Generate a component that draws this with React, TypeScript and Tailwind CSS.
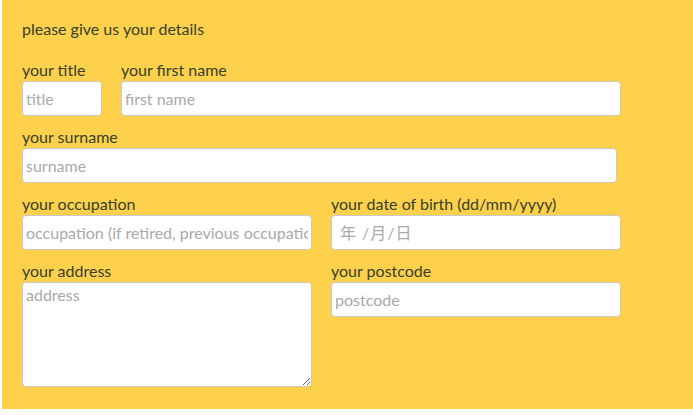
import React from 'react';

const font = { fontFamily: 'Lato, "Noto Sans CJK SC", sans-serif' };

const inputClass =
  'h-[35px] rounded-[4px] border border-[#c9c9c9] bg-white px-[3px] text-[16px] text-[#333] placeholder:text-[#a9a9a9] outline-none';

const Field: React.FC<{ label: string; width: string; children: React.ReactNode }> = ({ label, width, children }) => (
  <div className={`flex flex-col ${width}`}>
    <label className="mb-[2px] h-[18px] text-[16px] leading-[18px] text-[#38402f] whitespace-nowrap">{label}</label>
    {children}
  </div>
);

export default function App() {
  return (
    <div className="h-[415px] w-[693px] bg-white" style={font}>
      <div className="ml-[2px] h-[409px] bg-[#fdd14b] pl-[20px] pt-[19px]">
        <p className="h-[20px] text-[16px] leading-[20px] text-[#38402f]">please give us your details</p>

        <div className="mt-[22px] flex gap-[19px]">
          <Field label="your title" width="w-[80px]">
            <input className={`${inputClass} w-[80px]`} placeholder="title" />
          </Field>
          <Field label="your first name" width="w-[500px]">
            <input className={`${inputClass} w-[500px]`} placeholder="first name" />
          </Field>
        </div>

        <div className="mt-[12px] flex">
          <Field label="your surname" width="w-[595px]">
            <input className={`${inputClass} w-[595px]`} placeholder="surname" />
          </Field>
        </div>

        <div className="mt-[12px] flex gap-[19px]">
          <Field label="your occupation" width="w-[290px]">
            <input className={`${inputClass} w-[290px]`} placeholder="occupation (if retired, previous occupation)" />
          </Field>
          <Field label="your date of birth (dd/mm/yyyy)" width="w-[290px]">
            <input className={`${inputClass} w-[290px] pl-[8px] tracking-[1px]`} placeholder="年 /月/日" />
          </Field>
        </div>

        <div className="mt-[12px] flex gap-[19px]">
          <Field label="your address" width="w-[290px]">
            <textarea className={`${inputClass} h-[105px] w-[290px] resize pt-[2px] leading-[20px]`} placeholder="address" />
          </Field>
          <Field label="your postcode" width="w-[290px]">
            <input className={`${inputClass} w-[290px]`} placeholder="postcode" />
          </Field>
        </div>
      </div>
    </div>
  );
}
